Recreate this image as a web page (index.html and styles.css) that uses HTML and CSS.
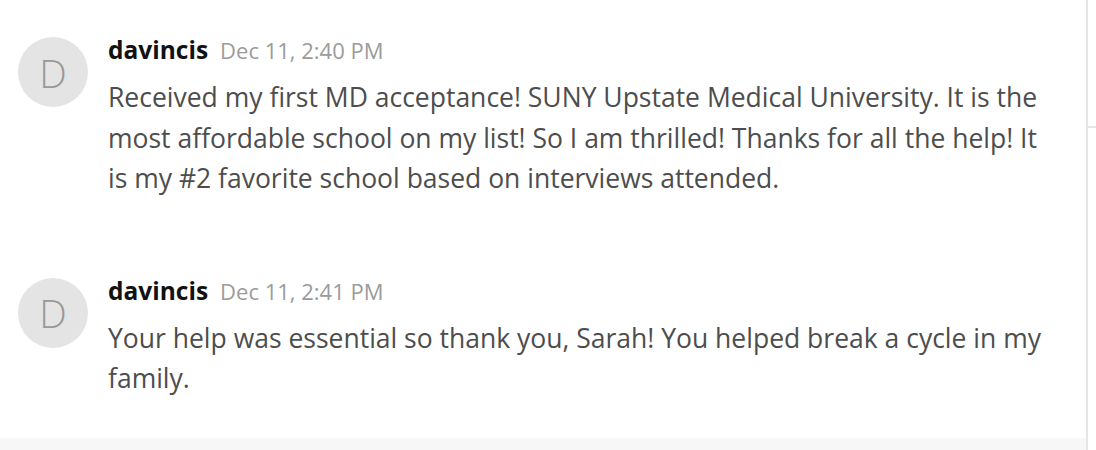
FILE: index.html
```html
<!DOCTYPE html>
<html>
<head>
<meta charset="utf-8">
<link rel="stylesheet" href="styles.css">
</head>
<body>
<div class="page">
  <div class="main">
    <div class="msg">
      <div class="avatar">D</div>
      <div class="content">
        <div class="head"><span class="name">davincis</span><span class="time">Dec 11, 2:40 PM</span></div>
        <p class="text">Received my first MD acceptance! SUNY Upstate Medical University. It is the most affordable school on my list! So I am thrilled! Thanks for all the help! It is my #2 favorite school based on interviews attended.</p>
      </div>
    </div>
    <div class="msg">
      <div class="avatar">D</div>
      <div class="content">
        <div class="head"><span class="name">davincis</span><span class="time">Dec 11, 2:41 PM</span></div>
        <p class="text">Your help was essential so thank you, Sarah! You helped break a cycle in my family.</p>
      </div>
    </div>
    <div class="band"></div>
  </div>
  <div class="side"><div class="side-top"></div></div>
</div>
</body>
</html>
```
FILE: styles.css
```css
html, body { margin: 0; padding: 0; background: #fff; }
body { font-family: "Open Sans", "Noto Sans", sans-serif; overflow: hidden; }
.page { display: flex; width: 1096px; height: 450px; }
.main { width: 1086px; display: flex; flex-direction: column; }
.side { flex: 1; border-left: 2px solid #e6e6e6; }
.side-top { height: 126px; border-bottom: 2px solid #e6e6e6; }
.msg { display: flex; padding: 35px 0 42px 18px; gap: 20px; }
.msg + .msg { padding-bottom: 38px; }
.avatar { width: 70px; height: 70px; border-radius: 50%; background: #e4e4e4; color: #999; font-size: 39px; font-weight: 300; line-height: 1; display: flex; align-items: center; justify-content: center; margin-top: 2px; flex: none; }
.content { width: 940px; }
.head { height: 30px; line-height: 30px; display: flex; align-items: baseline; gap: 12px; }
.name { font-size: 24.5px; font-weight: 700; color: #111; }
.time { font-size: 22px; color: #9b9b9b; }
.text { margin: 12px 0 0; font-size: 26.5px; line-height: 40.5px; color: #4d4d4d; }
.band { margin-top: auto; height: 12px; background: #f7f7f7; flex: none; }
```
